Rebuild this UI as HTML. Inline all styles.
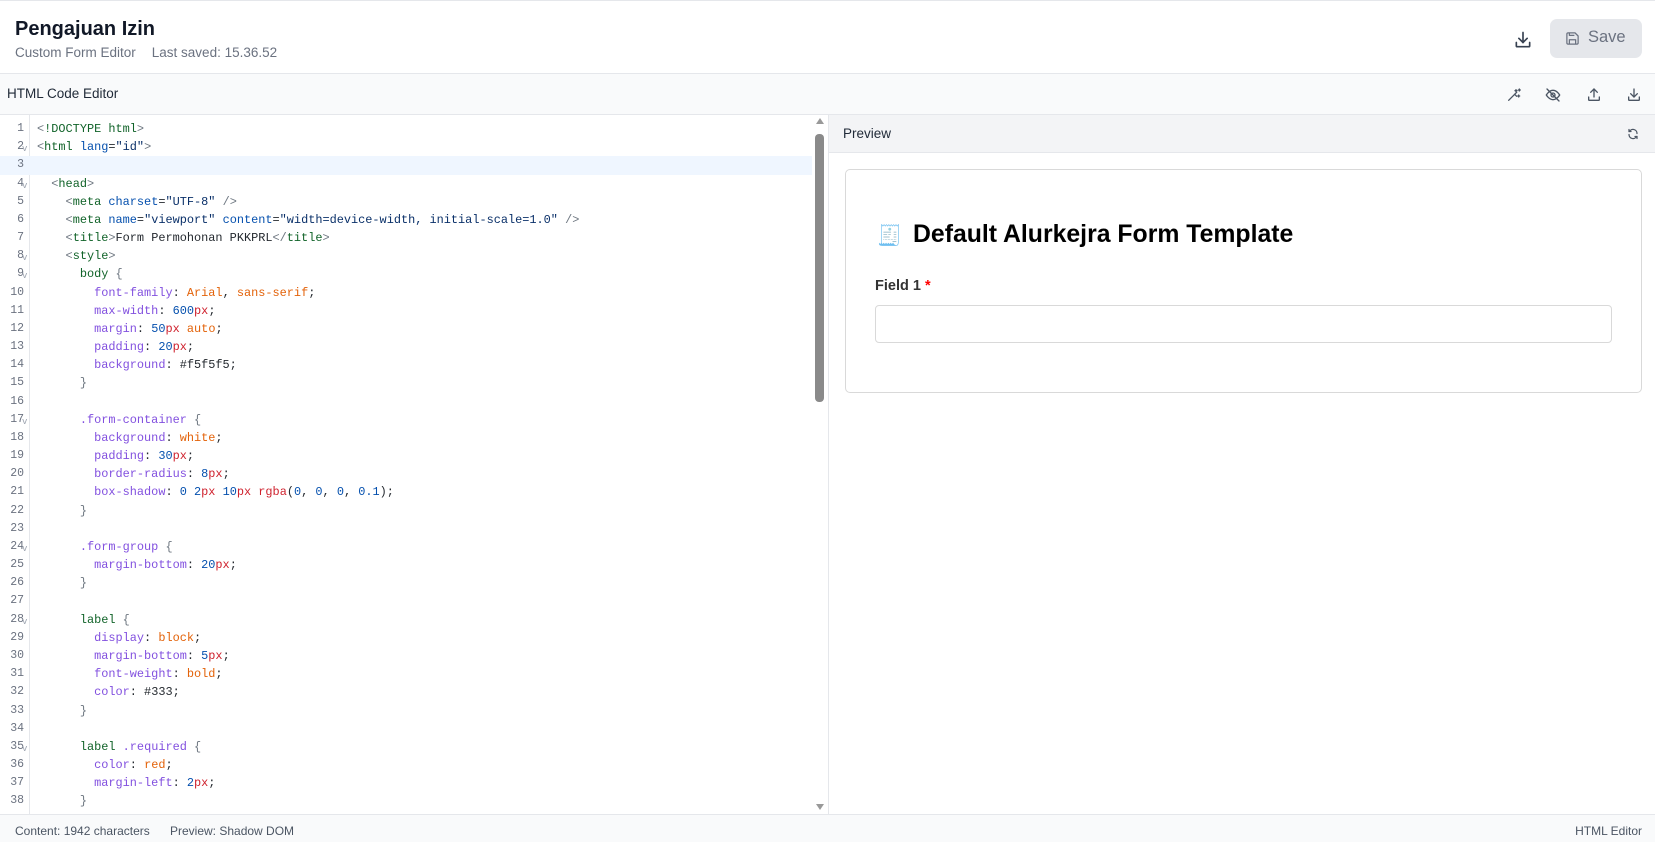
<!DOCTYPE html>
<html><head><meta charset="utf-8">
<style>
*{box-sizing:border-box;margin:0;padding:0}
body{width:1655px;height:842px;overflow:hidden;background:#fff;font-family:"Liberation Sans",Arial,sans-serif;position:relative;color:#111827}
.abs{position:absolute}
#hdr{left:0;top:0;width:1655px;height:74px;border-top:1px solid #e5e7eb;border-bottom:1px solid #e5e7eb;background:#fff}
#tb{left:0;top:74px;width:1655px;height:41px;background:#f9fafb;border-bottom:1px solid #e5e7eb}
#gut{left:0;top:115px;width:30px;height:699px;border-right:1px solid #e5e7eb;background:#fff}
#code{left:0;top:120px;width:812px;font-family:"Liberation Mono",monospace;font-size:11.9px;}
.ln{height:18.18px;line-height:18.18px;white-space:pre;position:relative}
.ln .n{position:absolute;left:0;width:24px;text-align:right;color:#6b7280;font-size:11.5px}
.ln .f{position:absolute;left:22px;top:2px;color:#9ca3af;font-size:9px}
.ln .c{position:absolute;left:37px;color:#24292f}
.hl{background:#eff6ff}
.t{color:#116329}.a{color:#0550ae}.s{color:#0a3069}.p{color:#8250df}.v{color:#e36209}.nu{color:#0550ae}.u{color:#cf222e}.g{color:#6e7781}.sel{color:#116329}.cl{color:#8250df}
#sb{left:814px;top:115px;width:13px;height:699px;background:#fff}
#pv{left:828px;top:115px;width:827px;height:699px;border-left:1px solid #e5e7eb}
#ft{left:0;top:814px;width:1655px;height:28px;background:#f9fafb;border-top:1px solid #e5e7eb;font-size:12px;color:#4b5563}
svg{position:absolute}
</style></head><body>
<div id="hdr" class="abs">
  <div class="abs" style="left:15px;top:17px;font-size:20px;font-weight:bold;color:#111827">Pengajuan Izin</div>
  <div class="abs" style="left:15px;top:44px;font-size:13.5px;color:#6b7280">Custom Form Editor<span style="margin-left:16px">Last saved: 15.36.52</span></div>
  <svg style="left:1513px;top:29px" width="20" height="20" viewBox="0 0 24 24" fill="none" stroke="#374151" stroke-width="2" stroke-linecap="round" stroke-linejoin="round"><path d="M4 15v4a1 1 0 0 0 1 1h14a1 1 0 0 0 1-1v-4"/><path d="M12 3v12"/><path d="M7 10l5 5 5-5"/></svg>
  <div class="abs" style="left:1550px;top:18px;width:92px;height:39px;background:#e5e7eb;border-radius:7px"></div>
  <svg style="left:1565px;top:30px" width="15" height="15" viewBox="0 0 24 24" fill="none" stroke="#6b7280" stroke-width="2" stroke-linejoin="round"><path d="M5 3h11l5 5v11a2 2 0 0 1-2 2H5a2 2 0 0 1-2-2V5a2 2 0 0 1 2-2z"/><path d="M7 21v-7h10v7"/><path d="M7 3v4h8"/></svg>
  <div class="abs" style="left:1588px;top:27px;font-size:16.5px;color:#6b7280">Save</div>
</div>
<div id="tb" class="abs">
  <div class="abs" style="left:7px;top:12px;font-size:13.5px;color:#1f2937">HTML Code Editor</div>
  <svg style="left:1506px;top:13px" width="16" height="16" viewBox="0 0 24 24" fill="none" stroke="#4b5563" stroke-width="2" stroke-linecap="round"><path d="M4 20L16 8"/><path d="M13 11l3 3" /><path d="M15 4v3M13.5 5.5h3M20 3v3M18.5 4.5h3M19 12v3M17.5 13.5h3"/></svg>
  <svg style="left:1545px;top:13px" width="16" height="16" viewBox="0 0 24 24" fill="none" stroke="#4b5563" stroke-width="2" stroke-linecap="round"><path d="M2 12s4-7 10-7 10 7 10 7-4 7-10 7S2 12 2 12z"/><circle cx="12" cy="12" r="3"/><path d="M3 3l18 18"/></svg>
  <svg style="left:1586px;top:13px" width="16" height="16" viewBox="0 0 24 24" fill="none" stroke="#4b5563" stroke-width="2" stroke-linecap="round" stroke-linejoin="round"><path d="M4 15v4a1 1 0 0 0 1 1h14a1 1 0 0 0 1-1v-4"/><path d="M12 15V3"/><path d="M7 8l5-5 5 5"/></svg>
  <svg style="left:1626px;top:13px" width="16" height="16" viewBox="0 0 24 24" fill="none" stroke="#4b5563" stroke-width="2" stroke-linecap="round" stroke-linejoin="round"><path d="M4 15v4a1 1 0 0 0 1 1h14a1 1 0 0 0 1-1v-4"/><path d="M12 3v12"/><path d="M7 10l5 5 5-5"/></svg>
</div>
<div id="gut" class="abs"></div>
<div id="code" class="abs">
<div class="ln"><span class="n">1</span><span class="c"><span class="g">&lt;</span><span class="t">!DOCTYPE html</span><span class="g">&gt;</span></span></div>
<div class="ln"><span class="n">2</span><span class="f">v</span><span class="c"><span class="g">&lt;</span><span class="t">html</span> <span class="a">lang</span>=<span class="s">"id"</span><span class="g">&gt;</span></span></div>
<div class="ln hl"><span class="n">3</span><span class="c"></span></div>
<div class="ln"><span class="n">4</span><span class="f">v</span><span class="c">  <span class="g">&lt;</span><span class="t">head</span><span class="g">&gt;</span></span></div>
<div class="ln"><span class="n">5</span><span class="c">    <span class="g">&lt;</span><span class="t">meta</span> <span class="a">charset</span>=<span class="s">"UTF-8"</span> <span class="g">/&gt;</span></span></div>
<div class="ln"><span class="n">6</span><span class="c">    <span class="g">&lt;</span><span class="t">meta</span> <span class="a">name</span>=<span class="s">"viewport"</span> <span class="a">content</span>=<span class="s">"width=device-width, initial-scale=1.0"</span> <span class="g">/&gt;</span></span></div>
<div class="ln"><span class="n">7</span><span class="c">    <span class="g">&lt;</span><span class="t">title</span><span class="g">&gt;</span>Form Permohonan PKKPRL<span class="g">&lt;/</span><span class="t">title</span><span class="g">&gt;</span></span></div>
<div class="ln"><span class="n">8</span><span class="f">v</span><span class="c">    <span class="g">&lt;</span><span class="t">style</span><span class="g">&gt;</span></span></div>
<div class="ln"><span class="n">9</span><span class="f">v</span><span class="c">      <span class="sel">body</span> <span class="g">{</span></span></div>
<div class="ln"><span class="n">10</span><span class="c">        <span class="p">font-family</span>: <span class="v">Arial</span>, <span class="v">sans-serif</span>;</span></div>
<div class="ln"><span class="n">11</span><span class="c">        <span class="p">max-width</span>: <span class="nu">600</span><span class="u">px</span>;</span></div>
<div class="ln"><span class="n">12</span><span class="c">        <span class="p">margin</span>: <span class="nu">50</span><span class="u">px</span> <span class="v">auto</span>;</span></div>
<div class="ln"><span class="n">13</span><span class="c">        <span class="p">padding</span>: <span class="nu">20</span><span class="u">px</span>;</span></div>
<div class="ln"><span class="n">14</span><span class="c">        <span class="p">background</span>: #f5f5f5;</span></div>
<div class="ln"><span class="n">15</span><span class="c">      <span class="g">}</span></span></div>
<div class="ln"><span class="n">16</span><span class="c"></span></div>
<div class="ln"><span class="n">17</span><span class="f">v</span><span class="c">      <span class="cl">.form-container</span> <span class="g">{</span></span></div>
<div class="ln"><span class="n">18</span><span class="c">        <span class="p">background</span>: <span class="v">white</span>;</span></div>
<div class="ln"><span class="n">19</span><span class="c">        <span class="p">padding</span>: <span class="nu">30</span><span class="u">px</span>;</span></div>
<div class="ln"><span class="n">20</span><span class="c">        <span class="p">border-radius</span>: <span class="nu">8</span><span class="u">px</span>;</span></div>
<div class="ln"><span class="n">21</span><span class="c">        <span class="p">box-shadow</span>: <span class="nu">0</span> <span class="nu">2</span><span class="u">px</span> <span class="nu">10</span><span class="u">px</span> <span class="u">rgba</span>(<span class="nu">0</span>, <span class="nu">0</span>, <span class="nu">0</span>, <span class="nu">0.1</span>);</span></div>
<div class="ln"><span class="n">22</span><span class="c">      <span class="g">}</span></span></div>
<div class="ln"><span class="n">23</span><span class="c"></span></div>
<div class="ln"><span class="n">24</span><span class="f">v</span><span class="c">      <span class="cl">.form-group</span> <span class="g">{</span></span></div>
<div class="ln"><span class="n">25</span><span class="c">        <span class="p">margin-bottom</span>: <span class="nu">20</span><span class="u">px</span>;</span></div>
<div class="ln"><span class="n">26</span><span class="c">      <span class="g">}</span></span></div>
<div class="ln"><span class="n">27</span><span class="c"></span></div>
<div class="ln"><span class="n">28</span><span class="f">v</span><span class="c">      <span class="sel">label</span> <span class="g">{</span></span></div>
<div class="ln"><span class="n">29</span><span class="c">        <span class="p">display</span>: <span class="v">block</span>;</span></div>
<div class="ln"><span class="n">30</span><span class="c">        <span class="p">margin-bottom</span>: <span class="nu">5</span><span class="u">px</span>;</span></div>
<div class="ln"><span class="n">31</span><span class="c">        <span class="p">font-weight</span>: <span class="v">bold</span>;</span></div>
<div class="ln"><span class="n">32</span><span class="c">        <span class="p">color</span>: #333;</span></div>
<div class="ln"><span class="n">33</span><span class="c">      <span class="g">}</span></span></div>
<div class="ln"><span class="n">34</span><span class="c"></span></div>
<div class="ln"><span class="n">35</span><span class="f">v</span><span class="c">      <span class="sel">label</span> <span class="cl">.required</span> <span class="g">{</span></span></div>
<div class="ln"><span class="n">36</span><span class="c">        <span class="p">color</span>: <span class="v">red</span>;</span></div>
<div class="ln"><span class="n">37</span><span class="c">        <span class="p">margin-left</span>: <span class="nu">2</span><span class="u">px</span>;</span></div>
<div class="ln"><span class="n">38</span><span class="c">      <span class="g">}</span></span></div>
</div>
<div id="sb" class="abs">
  <div class="abs" style="left:2px;top:3px;width:0;height:0;border-left:4px solid transparent;border-right:4px solid transparent;border-bottom:6px solid #999"></div>
  <div class="abs" style="left:1px;top:19px;width:9px;height:268px;background:#8a8a8a;border-radius:4px"></div>
  <div class="abs" style="left:2px;top:689px;width:0;height:0;border-left:4px solid transparent;border-right:4px solid transparent;border-top:6px solid #999"></div>
</div>
<div id="pv" class="abs">
  <div class="abs" style="left:0;top:0;width:827px;height:38px;background:#f3f4f6;border-bottom:1px solid #e5e7eb"></div>
  <div class="abs" style="left:14px;top:11px;font-size:13.5px;color:#1f2937">Preview</div>
  <svg style="left:798px;top:13px" width="12" height="12" viewBox="0 0 24 24" fill="none" stroke="#4b5563" stroke-width="2.5" stroke-linecap="round"><path d="M20 11A8 8 0 0 0 5 7"/><path d="M4 3v4h4"/><path d="M4 13a8 8 0 0 0 15 4"/><path d="M20 21v-4h-4"/></svg>
  <div class="abs" style="left:16px;top:54px;width:797px;height:224px;border:1px solid #d9d9d9;border-radius:5px;background:#fff"></div>
  <div class="abs" style="left:48px;top:108px;font-size:20px">🧾</div>
  <div class="abs" style="left:84px;top:106px;font-size:24.8px;font-weight:bold;color:#000">Default Alurkejra Form Template</div>
  <div class="abs" style="left:46px;top:163px;font-size:14.5px;font-weight:bold;color:#333">Field 1 <span style="color:red">*</span></div>
  <div class="abs" style="left:46px;top:190px;width:737px;height:38px;border:1px solid #d9d9d9;border-radius:4px"></div>
</div>
<div id="ft" class="abs">
  <div class="abs" style="left:15px;top:9px">Content: 1942 characters</div>
  <div class="abs" style="left:170px;top:9px">Preview: Shadow DOM</div>
  <div class="abs" style="right:13px;top:9px">HTML Editor</div>
</div>
</body></html>
